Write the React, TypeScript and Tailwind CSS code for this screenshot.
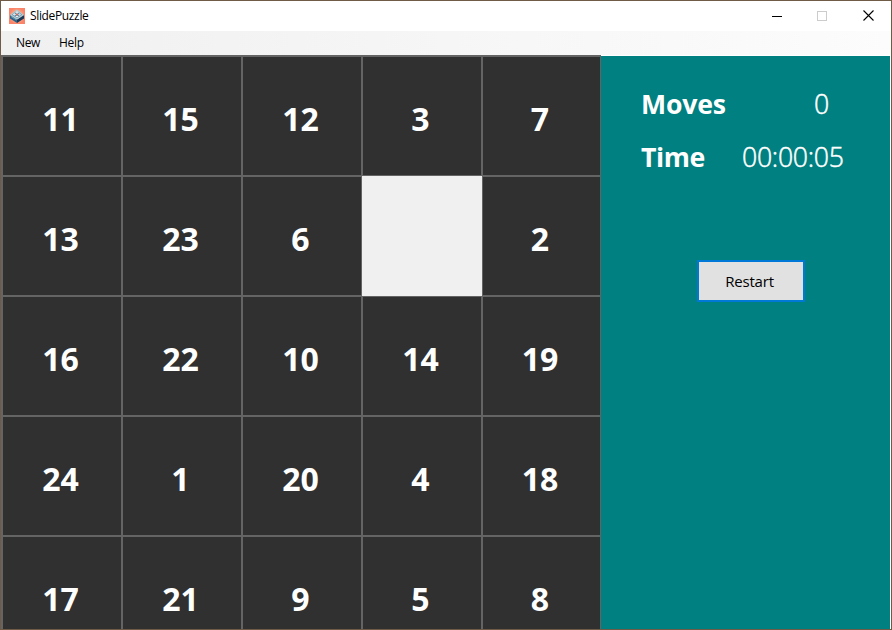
const tiles: (number | null)[] = [
  11, 15, 12, 3, 7,
  13, 23, 6, null, 2,
  16, 22, 10, 14, 19,
  24, 1, 20, 4, 18,
  17, 21, 9, 5, 8,
];

function AppIcon() {
  return (
    <svg width="16" height="16" viewBox="0 0 16 16" aria-hidden="true">
      <defs>
        <radialGradient id="glow">
          <stop offset="0" stopColor="#ffd9b0" />
          <stop offset="1" stopColor="#fb8468" />
        </radialGradient>
      </defs>
      <rect width="16" height="16" fill="url(#glow)" />
      <path d="M1 7 8 11.5 8 15 1 10.5Z" fill="#2f6488" />
      <path d="M15 7 8 11.5 8 15 15 10.5Z" fill="#1a3a5a" />
      <path d="M8 1.5 15 7 8 11.5 1 7Z" fill="#a9ccd8" />
      <path d="M8 2.8 13 6.8 8 10 3 6.8Z" fill="#5b7c94" />
      <path d="M8 2.6 10 4.4 8 6 6 4.4Z" fill="#d9e3e4" />
      <path d="M5.3 5 7.2 6.6 5.4 7.8 3.6 6.6Z" fill="#dce8ea" />
      <path d="M10.6 5 12.4 6.7 10.6 7.9 8.8 6.6Z" fill="#c3d4dc" />
      <path d="M8 5.6 9.2 6.6 8 7.5 6.8 6.6Z" fill="#d8685c" />
      <path d="M8 7.4 9.8 8.4 8 9.5 6.2 8.4Z" fill="#e9eef0" />
      <path d="M2 8.5 7.5 12" stroke="#7cb8d0" strokeWidth="0.7" />
    </svg>
  );
}

function TitleBar() {
  return (
    <header className="flex h-[30px] shrink-0 items-center bg-white pl-2">
      <AppIcon />
      <span className="ml-[5px] text-[12px] leading-4 tracking-[-0.35px] text-black">SlidePuzzle</span>
      <div className="ml-auto flex h-full">
        <button className="flex w-[46px] items-center justify-center pb-px" aria-label="Minimize">
          <svg width="10" height="10" shapeRendering="crispEdges"><path d="M0 5h10v1H0z" fill="#000" /></svg>
        </button>
        <button className="flex w-[45px] items-center justify-center pr-px" aria-label="Maximize" disabled>
          <svg width="10" height="10" shapeRendering="crispEdges"><rect x=".5" y=".5" width="9" height="9" fill="none" stroke="#ccc" /></svg>
        </button>
        <button className="flex w-[46px] items-center justify-center pb-px" aria-label="Close">
          <svg width="11" height="11"><path d="M.5.5l10 10M10.5.5l-10 10" stroke="#000" strokeWidth="1.1" /></svg>
        </button>
      </div>
    </header>
  );
}

function Tile({ value }: { value: number | null }) {
  if (value === null) return <div className="bg-[#f0f0f0]" />;
  return (
    <div className="flex items-center justify-center border border-[#646464] bg-[#303030] pt-[5px] pr-[3px] text-[32px] leading-none font-bold text-white">
      {value}
    </div>
  );
}

export default function App() {
  return (
    <div className="flex h-[630px] w-[892px] flex-col overflow-hidden border border-[#705b47] bg-white font-['Open_Sans','Noto_Sans',sans-serif]">
      <TitleBar />
      <nav className="flex h-6 shrink-0 items-center bg-linear-to-r from-[#f0f0f0] to-[#fcfcfc] pl-[15px] text-[12px] leading-4 text-black">
        <span className="w-[43px] tracking-[-0.35px]">New</span>
        <span className="tracking-[-0.25px]">Help</span>
      </nav>
      <main className="flex min-h-0 flex-1">
        <section className="h-full w-[600px] shrink-0 overflow-hidden border-t border-l border-[#646464]">
          <div className="grid grid-cols-[repeat(4,120px)_119px] auto-rows-[120px]">
            {tiles.map((value, i) => <Tile key={i} value={value} />)}
          </div>
        </section>
        <aside className="mt-px mr-px flex flex-1 flex-col bg-[#008080] pt-[30px] pl-[40px] text-[26.67px] text-white">
          <div className="flex h-[53px] items-start leading-9">
            <span className="w-[173px] font-bold tracking-[-0.2px]">Moves</span>
            <span className="font-light [-webkit-text-stroke:0.5px_white]">0</span>
          </div>
          <div className="flex h-[53px] items-start leading-9">
            <span className="w-[101px] font-bold tracking-[-0.4px]">Time</span>
            <span className="font-light tracking-[-0.3px] [-webkit-text-stroke:0.5px_white]">00:00:05</span>
          </div>
          <button className="mt-[68px] ml-[56px] flex h-[42px] w-[108px] items-center justify-center border-2 border-[#0078d7] bg-[#e1e1e1] pr-[3px] text-[15px] tracking-[-0.2px] text-black">
            Restart
          </button>
        </aside>
      </main>
    </div>
  );
}
